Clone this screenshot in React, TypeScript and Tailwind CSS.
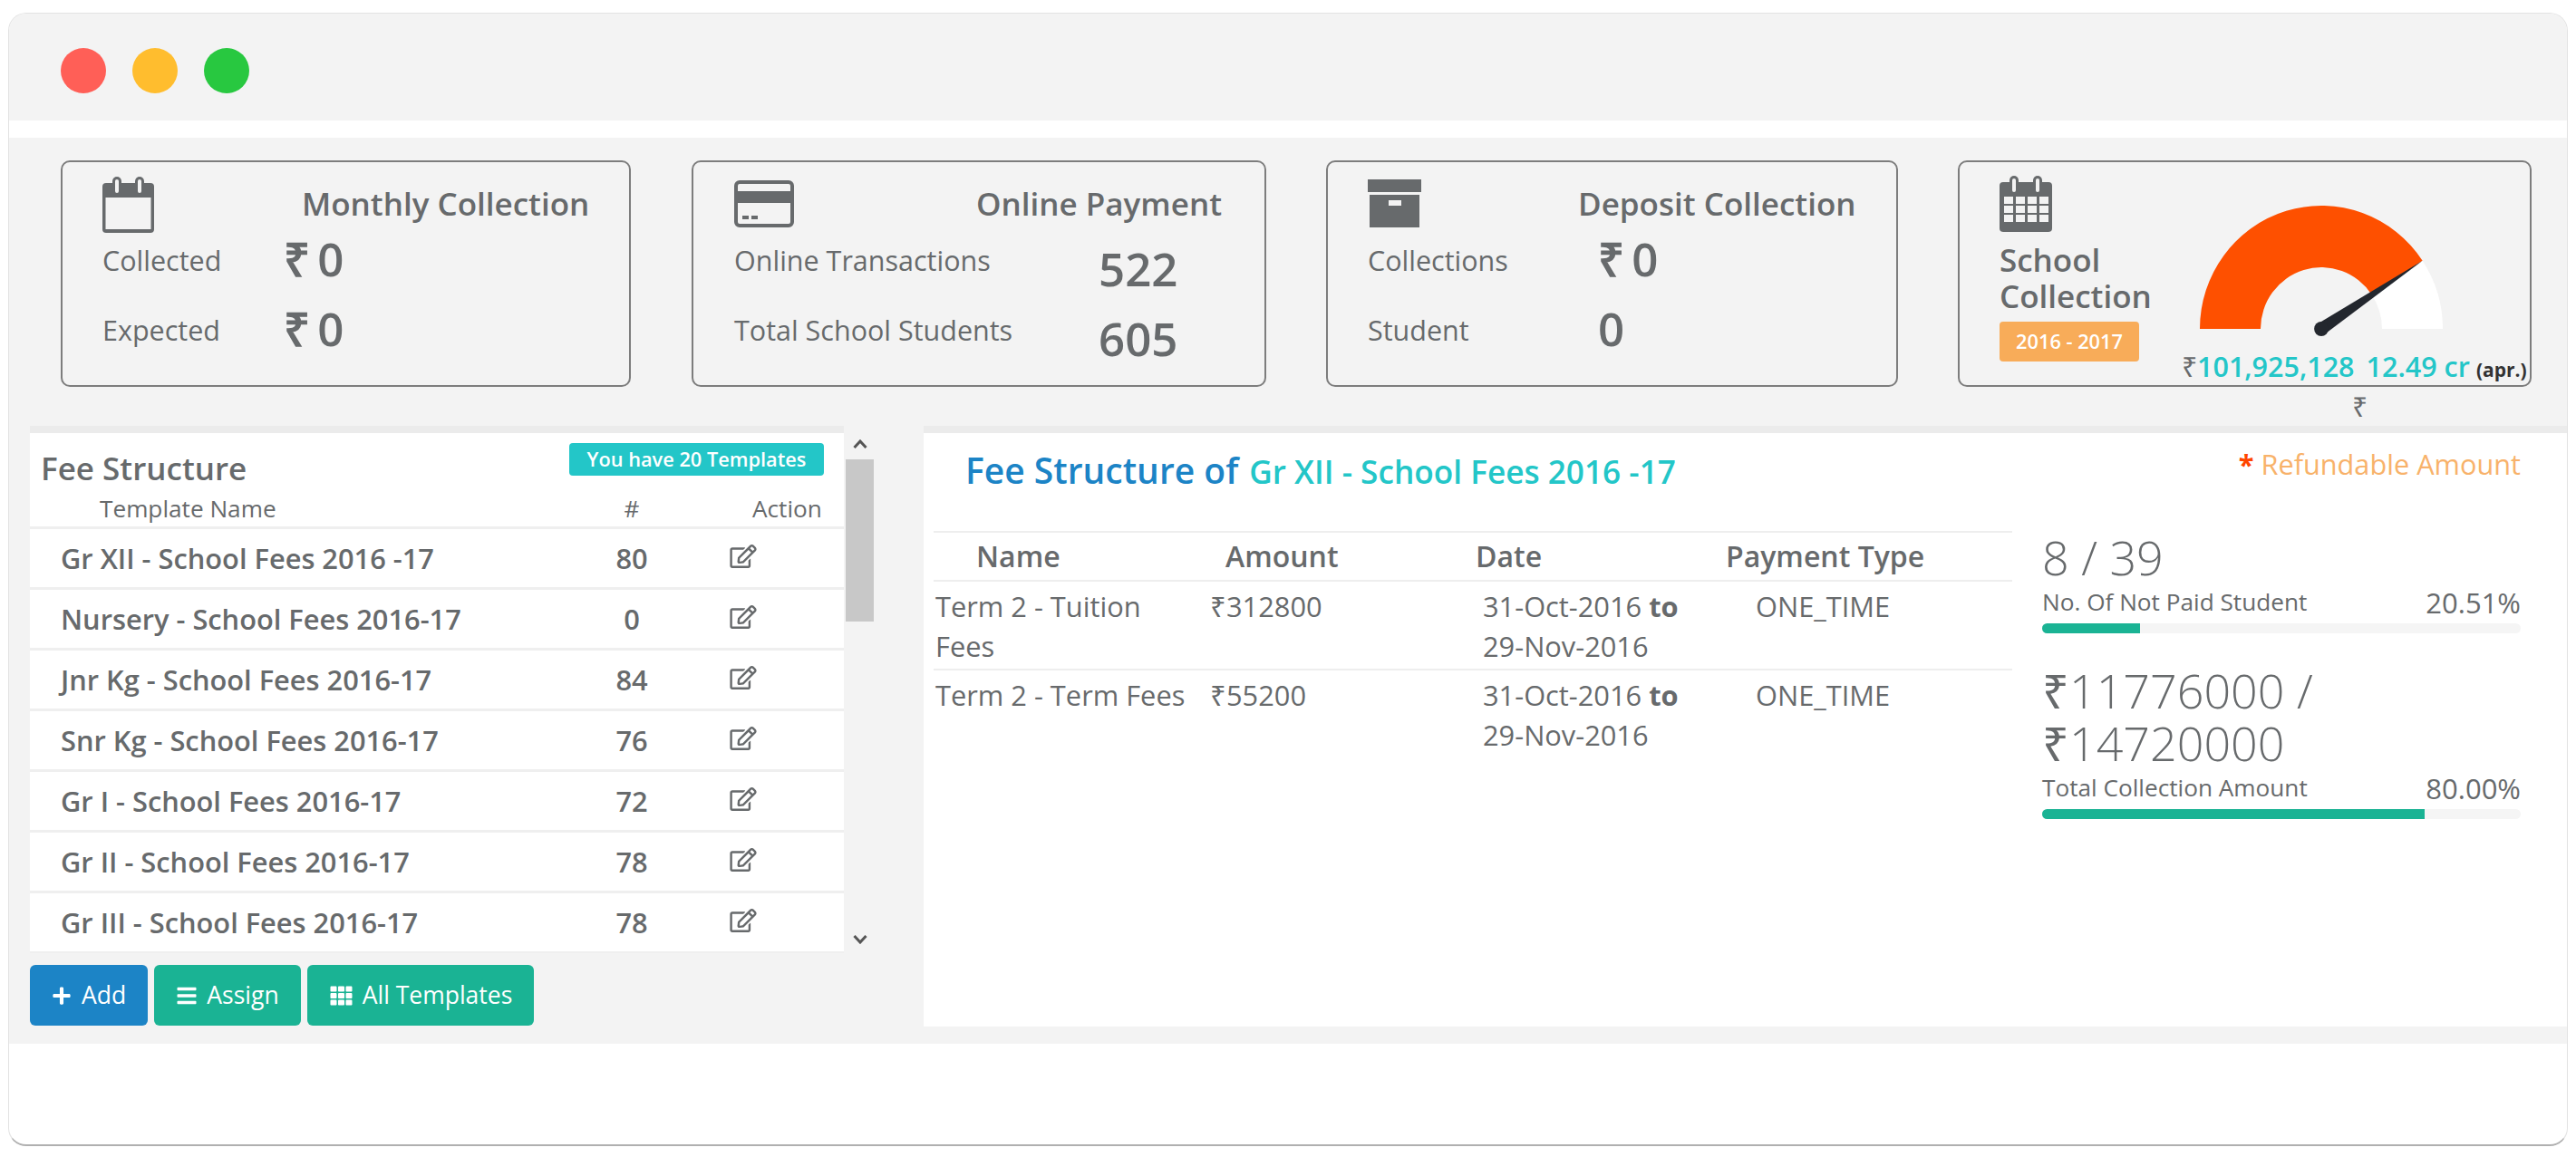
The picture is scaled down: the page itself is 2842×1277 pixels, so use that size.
import React from 'react';
import { FaBars, FaPlus, FaRegEdit, FaTh } from 'react-icons/fa';

const templates = [
  { name: 'Gr XII - School Fees 2016 -17', count: 80 },
  { name: 'Nursery - School Fees 2016-17', count: 0 },
  { name: 'Jnr Kg - School Fees 2016-17', count: 84 },
  { name: 'Snr Kg - School Fees 2016-17', count: 76 },
  { name: 'Gr I - School Fees 2016-17', count: 72 },
  { name: 'Gr II - School Fees 2016-17', count: 78 },
  { name: 'Gr III - School Fees 2016-17', count: 78 },
];

// Calendar outline used in the first card
const CalendarIcon = () => (
  <svg viewBox="0 0 57 62" className="w-[57px] h-[62px]">
    <rect x="0" y="7" width="57" height="55" rx="4" fill="#676a6c" />
    <rect x="3.5" y="23" width="50" height="35" fill="#f3f3f3" />
    <rect x="11" y="0" width="10" height="19" rx="5" fill="#676a6c" />
    <rect x="14" y="3" width="4" height="15" rx="2" fill="#f3f3f3" />
    <rect x="36" y="0" width="10" height="19" rx="5" fill="#676a6c" />
    <rect x="39" y="3" width="4" height="15" rx="2" fill="#f3f3f3" />
  </svg>
);

const CreditCardIcon = () => (
  <svg viewBox="0 0 66 52" className="w-[66px] h-[52px]">
    <rect x="2" y="2" width="62" height="48" rx="4" fill="none" stroke="#676a6c" strokeWidth="4" />
    <rect x="2" y="12" width="62" height="13" fill="#676a6c" />
    <rect x="9" y="39" width="7" height="4" fill="#676a6c" />
    <rect x="19" y="39" width="7" height="4" fill="#676a6c" />
  </svg>
);

const ArchiveIcon = () => (
  <svg viewBox="0 0 59 53" className="w-[59px] h-[53px]">
    <rect x="0" y="0" width="59" height="14" fill="#676a6c" />
    <rect x="2" y="17" width="55" height="36" fill="#676a6c" />
    <rect x="23" y="23" width="14" height="6" fill="#f3f3f3" />
  </svg>
);

// Calendar with the day grid, fourth card
const CalendarGridIcon = () => {
  const cols = [5, 18, 31, 44];
  const rows = [23, 33, 43];
  return (
    <svg viewBox="0 0 58 62" className="w-[58px] h-[62px]">
      <rect x="0" y="7" width="58" height="55" rx="4" fill="#676a6c" />
      {rows.map((y) =>
        cols.map((x) => <rect key={`${x}-${y}`} x={x} y={y} width="10" height="8" fill="#f3f3f3" />)
      )}
      <rect x="11" y="0" width="10" height="19" rx="5" fill="#676a6c" />
      <rect x="14" y="3" width="4" height="15" rx="2" fill="#f3f3f3" />
      <rect x="37" y="0" width="10" height="19" rx="5" fill="#676a6c" />
      <rect x="40" y="3" width="4" height="15" rx="2" fill="#f3f3f3" />
    </svg>
  );
};

const Gauge = () => (
  <svg viewBox="0 0 274 150" preserveAspectRatio="none" className="w-[270px] h-[150px] ml-[19px]">
    <path d="M1 136 A136 136 0 0 1 250.3 60.8 L193.6 98.4 A68 68 0 0 0 69 136 Z" fill="#fe5000" />
    <path d="M250.3 60.8 A136 136 0 0 1 273 136 L205 136 A68 68 0 0 0 193.6 98.4 Z" fill="#ffffff" />
    <polygon points="133.1,130.2 140.9,141.8 250.3,60.8" fill="#23272e" />
    <circle cx="137" cy="136" r="8" fill="#23272e" />
  </svg>
);

type CardRow = { label: string; value: string };

const StatCard = ({
  icon,
  iconClass,
  title,
  titleClass,
  widthClass,
  labelClass,
  valueClass,
  rows,
}: {
  icon: React.ReactNode;
  iconClass: string;
  title: string;
  titleClass: string;
  widthClass: string;
  labelClass: string;
  valueClass: string;
  rows: CardRow[];
}) => (
  <div className={`${widthClass} h-[250px] border-2 border-[#7d7d7d] rounded-[10px] pt-[16px] pl-[44px]`}>
    <div className="flex h-[54px] items-start">
      <div className={iconClass}>{icon}</div>
      <div className={`${titleClass} pt-[10px] text-[35px] leading-[40px] font-semibold whitespace-nowrap`}>{title}</div>
    </div>
    {rows.map((row) => (
      <div key={row.label} className="flex h-[77px] items-center">
        <div className={`${labelClass} text-[30.5px] whitespace-nowrap`}>{row.label}</div>
        <div className={`${valueClass} text-[51px] leading-[60px] font-semibold [word-spacing:-5px]`}>{row.value}</div>
      </div>
    ))}
  </div>
);

const Progress = ({ label, percent, fillClass }: { label: string; percent: string; fillClass: string }) => (
  <>
    <div className="flex items-center justify-between h-[34px] mt-[4px]">
      <span className="text-[26.2px]">{label}</span>
      <span className="text-[31px]">{percent}</span>
    </div>
    <div className="h-[11px] mt-[6px] rounded-full bg-[#f5f5f5] overflow-hidden">
      <div className={`${fillClass} h-full bg-[#1ab394]`} />
    </div>
  </>
);

export default function App() {
  return (
    <div className="w-[2842px] h-[1277px] bg-white pt-[14px] pl-[9px] font-['Open_Sans',sans-serif] text-[#676a6c]">
      <div className="w-[2824px] h-[1251px] flex flex-col overflow-hidden bg-white rounded-[20px] border border-[#e3e3e3] border-b-2 border-b-[#b0b0b0]">
        {/* window chrome */}
        <div className="h-[118px] shrink-0 bg-[#f3f3f3] flex items-center gap-[29px] pl-[57px] pt-[8px]">
          <div className="w-[50px] h-[50px] rounded-full bg-[#ff5f57]" />
          <div className="w-[50px] h-[50px] rounded-full bg-[#ffbd2e]" />
          <div className="w-[50px] h-[50px] rounded-full bg-[#28c840]" />
        </div>
        <div className="h-[19px] shrink-0" />

        <div className="h-[1000px] shrink-0 bg-[#f3f3f3] pt-[25px]">
          {/* summary cards */}
          <div className="flex pl-[57px]">
            <StatCard
              widthClass="w-[629px]"
              icon={<CalendarIcon />}
              iconClass="pt-0"
              title="Monthly Collection"
              titleClass="ml-[163px]"
              labelClass="w-[200px]"
              valueClass="pb-[6px]"
              rows={[
                { label: 'Collected', value: '₹ 0' },
                { label: 'Expected', value: '₹ 0' },
              ]}
            />
            <div className="w-[67px] shrink-0" />
            <StatCard
              widthClass="w-[634px]"
              icon={<div className="ml-[1px]"><CreditCardIcon /></div>}
              iconClass="pt-[4px]"
              title="Online Payment"
              titleClass="ml-[201px]"
              labelClass="w-[403px] pl-[1px]"
              valueClass="pt-[16px]"
              rows={[
                { label: 'Online Transactions', value: '522' },
                { label: 'Total School Students', value: '605' },
              ]}
            />
            <div className="w-[66px] shrink-0" />
            <StatCard
              widthClass="w-[631px]"
              icon={<ArchiveIcon />}
              iconClass="pt-[3px]"
              title="Deposit Collection"
              titleClass="ml-[173px]"
              labelClass="w-[254px]"
              valueClass="pb-[6px]"
              rows={[
                { label: 'Collections', value: '₹ 0' },
                { label: 'Student', value: '0' },
              ]}
            />
            <div className="w-[66px] shrink-0" />
            <div className="w-[633px] h-[250px] flex border-2 border-[#7d7d7d] rounded-[10px]">
              <div className="w-[245px] shrink-0 pl-[44px] pt-[15px]">
                <CalendarGridIcon />
                <div className="mt-[11px] text-[35px] leading-[40px] font-semibold">School Collection</div>
                <div className="mt-[8px] w-[154px] h-[44px] rounded-[4px] bg-[#f8ac59] flex items-center justify-center text-white text-[21.75px] font-semibold">
                  2016 - 2017
                </div>
              </div>
              <div className="pt-[48px]">
                <Gauge />
                <div className="mt-[7px] h-[40px] flex items-center whitespace-nowrap text-[30.5px] leading-[40px] font-semibold text-[#23c6c8]">
                  <span className="text-[#676a6c] font-normal">₹</span>
                  <span>101,925,128</span>
                  <span className="ml-[13px]">12.49 cr</span>
                  <span className="ml-[7px] pt-[8px] text-[21px] font-bold text-[#333333]">(apr.)</span>
                </div>
              </div>
            </div>
          </div>

          <div className="h-[43px] flex items-center text-[30px]">
            <span className="ml-[2585px]">₹</span>
          </div>

          <div className="flex items-start">
            {/* template list */}
            <div className="w-[898px] shrink-0 ml-[23px]">
              <div className="h-[582px] bg-white border-t-8 border-[#ebebeb] overflow-hidden">
                <div className="h-[106px] border-b-[3px] border-[#efefef]">
                  <div className="flex items-start justify-between pt-[11px] pl-[12px] pr-[22px]">
                    <div className="mt-[8px] text-[35px] leading-[40px] font-semibold">Fee Structure</div>
                    <div className="w-[281px] h-[36px] rounded-[4px] bg-[#23c6c8] flex items-center justify-center text-white text-[21.75px] font-semibold">
                      You have 20 Templates
                    </div>
                  </div>
                  <div className="flex items-center text-[26.2px] mt-[7px] h-[36px]">
                    <div className="w-[637px] pl-[77px]">Template Name</div>
                    <div className="w-[54px] text-center">#</div>
                    <div className="pl-[106px]">Action</div>
                  </div>
                </div>
                {templates.map((t) => (
                  <div key={t.name} className="h-[67px] flex items-center border-b-[3px] border-[#efefef] text-[30.8px] font-semibold">
                    <div className="w-[637px] pl-[34px]">{t.name}</div>
                    <div className="w-[54px] text-center">{t.count}</div>
                    <div className="pl-[81px] pb-[5px] font-normal">
                      <FaRegEdit className="w-[30px] h-[26px]" />
                    </div>
                  </div>
                ))}
              </div>
              <div className="flex gap-[7px] mt-[13px] text-white text-[26.5px]">
                <button className="w-[130px] h-[67px] rounded-[6px] bg-[#1c84c6] flex items-center justify-center gap-[11px]">
                  <FaPlus className="w-[22px] h-[22px]" />
                  Add
                </button>
                <button className="w-[162px] h-[67px] rounded-[6px] bg-[#1ab394] flex items-center justify-center gap-[10px]">
                  <FaBars className="w-[24px] h-[24px]" />
                  Assign
                </button>
                <button className="w-[250px] h-[67px] rounded-[6px] bg-[#1ab394] flex items-center justify-center gap-[10px]">
                  <FaTh className="w-[27px] h-[24px]" />
                  All Templates
                </button>
              </div>
            </div>

            {/* list scrollbar */}
            <div className="w-[31px] ml-[2px] flex flex-col items-center pt-[15px]">
              <svg viewBox="0 0 16 10" className="w-[16px] h-[10px]">
                <path d="M1.5 9 L8 2 L14.5 9" fill="none" stroke="#555555" strokeWidth="3" />
              </svg>
              <div className="w-[31px] h-[179px] mt-[12px] bg-[#c8c8c8]" />
              <svg viewBox="0 0 16 10" className="w-[16px] h-[10px] mt-[346px]">
                <path d="M1.5 1 L8 8 L14.5 1" fill="none" stroke="#555555" strokeWidth="3" />
              </svg>
            </div>

            {/* selected template */}
            <div className="flex-1 ml-[55px] h-[663px] bg-white border-t-8 border-[#ebebeb]">
              <div className="h-[108px] flex items-start justify-between pl-[46px] pr-[51px] pt-[19px]">
                <div className="whitespace-nowrap leading-[44px] font-semibold">
                  <span className="text-[39px] text-[#1c84c6]">Fee Structure of</span>
                  <span className="ml-[12px] text-[35.2px] text-[#23c6c8]">Gr XII - School Fees 2016 -17</span>
                </div>
                <div className="leading-[30px] text-[30.7px] text-[#f8b26a]">
                  <span className="text-[#ff4500] font-bold">*</span> Refundable Amount
                </div>
              </div>
              <div className="flex">
                <div className="w-[1190px] ml-[11px] text-[30.8px] leading-[44px]">
                  <div className="grid grid-cols-[305px_293px_276px_316px] h-[56px] items-center border-y-2 border-[#eeeeee] font-semibold text-[32px]">
                    <div className="pl-[47px]">Name</div>
                    <div className="pl-[17px]">Amount</div>
                    <div>Date</div>
                    <div>Payment Type</div>
                  </div>
                  <div className="grid grid-cols-[305px_293px_276px_316px] h-[98px] pt-[5px] border-b-2 border-[#eeeeee]">
                    <div className="pl-[2px]">
                      Term 2 - Tuition
                      <br />
                      Fees
                    </div>
                    <div>₹312800</div>
                    <div className="pl-[8px]">
                      31-Oct-2016 <b>to</b>
                      <br />
                      29-Nov-2016
                    </div>
                    <div className="pl-[33px]">ONE_TIME</div>
                  </div>
                  <div className="grid grid-cols-[305px_293px_276px_316px] pt-[5px]">
                    <div className="pl-[2px]">Term 2 - Term Fees</div>
                    <div>₹55200</div>
                    <div className="pl-[8px]">
                      31-Oct-2016 <b>to</b>
                      <br />
                      29-Nov-2016
                    </div>
                    <div className="pl-[33px]">ONE_TIME</div>
                  </div>
                </div>
                <div className="w-[528px] ml-[33px] font-light">
                  <div className="text-[52px] leading-[58px]">8 / 39</div>
                  <div className="font-normal">
                    <Progress label="No. Of Not Paid Student" percent="20.51%" fillClass="w-[20.51%]" />
                  </div>
                  <div className="mt-[34px] text-[52px] leading-[58px]">
                    ₹11776000 /
                    <br />
                    ₹14720000
                  </div>
                  <div className="font-normal">
                    <Progress label="Total Collection Amount" percent="80.00%" fillClass="w-[80%]" />
                  </div>
                </div>
              </div>
            </div>
          </div>
        </div>
      </div>
    </div>
  );
}
